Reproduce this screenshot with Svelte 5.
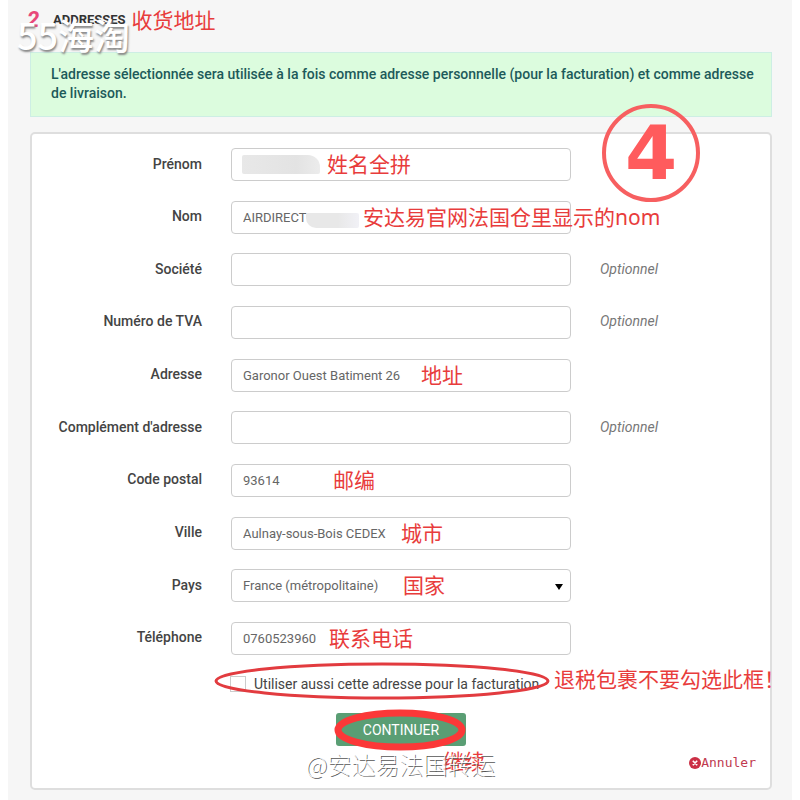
<script>
  const fields = [
    { id: 'firstname', label: 'Prénom', value: '', note: '姓名全拼', noteX: 96, mask: 'first' },
    { id: 'lastname', label: 'Nom', value: 'AIRDIRECT', note: '安达易官网法国仓里显示的nom', noteX: 132, mask: 'last' },
    { id: 'company', label: 'Société', value: '', optional: true },
    { id: 'vat', label: 'Numéro de TVA', value: '', optional: true },
    { id: 'address1', label: 'Adresse', value: 'Garonor Ouest Batiment 26', note: '地址', noteX: 190 },
    { id: 'address2', label: "Complément d'adresse", value: '', optional: true },
    { id: 'postcode', label: 'Code postal', value: '93614', note: '邮编', noteX: 102 },
    { id: 'city', label: 'Ville', value: 'Aulnay-sous-Bois CEDEX', note: '城市', noteX: 170 },
    { id: 'country', label: 'Pays', value: 'France (métropolitaine)', note: '国家', noteX: 172, select: true },
    { id: 'phone', label: 'Téléphone', value: '0760523960', note: '联系电话', noteX: 98 }
  ];
</script>

<main class="checkout">
  <header class="step">
    <span class="step-number">2</span>
    <h1>ADDRESSES</h1>
    <span class="note">收货地址</span>
    <span class="logo-mark">55海淘</span>
  </header>

  <p class="notice">
    L'adresse sélectionnée sera utilisée à la fois comme adresse personnelle (pour la facturation) et comme adresse de livraison.
  </p>

  <form class="card" onsubmit={(e) => e.preventDefault()}>
    <div class="rows">
      {#each fields as field}
        <div class="row">
          <label for={field.id}>{field.label}</label>
          <div class="control">
            {#if field.select}
              <select id={field.id}>
                <option>{field.value}</option>
              </select>
              <svg class="caret" viewBox="0 0 8 6" aria-hidden="true"><path d="M0 0h8L4 6z" /></svg>
            {:else}
              <input id={field.id} type="text" value={field.value} />
            {/if}
            {#if field.mask}
              <span class="mask {field.mask}"></span>
            {/if}
            {#if field.note}
              <span class="note over" style="left: {field.noteX}px">{field.note}</span>
            {/if}
          </div>
          {#if field.optional}
            <span class="optional">Optionnel</span>
          {/if}
        </div>
      {/each}
    </div>

    <div class="same-address">
      <label class="check">
        <input type="checkbox" />
        Utiliser aussi cette adresse pour la facturation
      </label>
      <svg class="ring" viewBox="0 0 336 38" aria-hidden="true">
        <ellipse cx="168" cy="19" rx="166" ry="17" />
      </svg>
      <span class="note over">退税包裹不要勾选此框！</span>
    </div>

    <div class="submit">
      <button type="submit">CONTINUER</button>
      <svg class="ring" viewBox="0 0 134 42" aria-hidden="true">
        <ellipse cx="67" cy="21" rx="62" ry="17" />
      </svg>
    </div>

    <div class="footer">
      <span class="note">继续</span>
      <span class="watermark">@安达易法国转运</span>
      <a href="#cancel">
        <svg viewBox="0 0 12 12" aria-hidden="true">
          <circle cx="6" cy="6" r="6" />
          <path d="M3.8 3.8l4.4 4.4M8.2 3.8L3.8 8.2" />
        </svg>Annuler
      </a>
    </div>

    <div class="badge">4</div>
  </form>
</main>

<style>
  :global(body) {
    margin: 0;
    background: #fff;
  }

  .checkout {
    box-sizing: border-box;
    min-height: 100vh;
    margin: 0 8px;
    padding: 8px 20px 10px 22px;
    background: #f6f6f6;
    font-family: Roboto, 'Noto Sans CJK SC', sans-serif;
    font-size: 13px;
    color: #444;
  }

  .step {
    position: relative;
    display: flex;
    align-items: center;
    height: 24px;
    margin-bottom: 20px;
  }

  .step-number {
    width: 23px;
    font-size: 22px;
    font-weight: 700;
    font-style: italic;
    line-height: 20px;
    text-indent: -3px;
    color: #e8487a;
  }

  h1 {
    margin: 0 6px 0 0;
    font-size: 13px;
    font-weight: 700;
    line-height: 20px;
    color: #333;
  }

  .logo-mark {
    position: absolute;
    top: 6px;
    left: -13px;
    font-family: 'Noto Sans CJK SC', sans-serif;
    font-size: 36px;
    font-weight: 500;
    line-height: 40px;
    white-space: nowrap;
    color: #fff;
    text-shadow: 1px 2px 2px #888;
  }

  .note {
    font-family: 'Noto Sans', 'Noto Sans CJK SC', sans-serif;
    font-size: 21px;
    font-weight: 400;
    line-height: 32px;
    white-space: nowrap;
    color: #e83c3c;
  }

  .note.over {
    position: absolute;
    top: 0;
    pointer-events: none;
  }

  .notice {
    margin: 0 0 15px;
    padding: 12px 10px 13px 20px;
    border: 1px solid #cdeee4;
    background: #dcfcde;
    font-size: 14px;
    font-weight: 500;
    line-height: 19px;
    color: #1d5a5a;
  }

  .card {
    position: relative;
    padding: 14px 0 17px;
    border: 2px solid #dedede;
    border-radius: 5px;
    background: #fff;
  }

  .rows {
    display: grid;
    align-content: space-between;
    min-height: 507px;
  }

  .row {
    display: grid;
    grid-template-columns: 1fr 2fr 1fr;
    column-gap: 29px;
    align-items: center;
  }

  .row > label {
    padding-bottom: 2px;
    font-size: 14px;
    font-weight: 500;
    text-align: right;
    white-space: nowrap;
  }

  .control {
    position: relative;
  }

  .control input,
  select {
    display: block;
    box-sizing: border-box;
    width: 100%;
    height: 33px;
    margin: 0;
    padding: 0 11px;
    border: 1px solid #ccc;
    border-radius: 4px;
    background: #fff;
    font: inherit;
    color: #666;
    appearance: none;
  }

  .caret {
    position: absolute;
    top: 15px;
    right: 8px;
    width: 8px;
    height: 6px;
  }

  .mask {
    position: absolute;
    border-radius: 2px 12px 2px 2px;
    background: linear-gradient(90deg, #e8e8e8, #e3e3e3 70%, #ececec);
  }

  .mask.first {
    top: 7px;
    left: 11px;
    width: 78px;
    height: 19px;
  }

  .mask.last {
    top: 12px;
    left: 75px;
    width: 53px;
    height: 15px;
    border-radius: 2px 2px 2px 10px;
    background: linear-gradient(90deg, #e8e8e8 60%, #f1f1f6);
  }

  .optional {
    padding-bottom: 2px;
    font-size: 14px;
    font-style: italic;
    color: #777;
  }

  .same-address {
    position: relative;
    margin: 20px 0 0 198px;
  }

  .check {
    display: flex;
    align-items: center;
    gap: 8px;
    height: 17px;
    font-size: 14px;
    white-space: nowrap;
  }

  .check input {
    width: 16px;
    height: 16px;
    margin: 0;
    border: 1px solid #ccc;
    background: #fff;
    appearance: none;
  }

  .ring {
    position: absolute;
    fill: none;
    stroke: #e23b3f;
    stroke-width: 3;
    pointer-events: none;
  }

  .same-address .ring {
    top: -13px;
    left: -16px;
    width: 336px;
    height: 38px;
  }

  .same-address .note {
    top: -12px;
    left: 324px;
  }

  .submit {
    position: relative;
    width: 130px;
    margin: 21px auto 9px;
  }

  button {
    width: 100%;
    height: 33px;
    padding: 0;
    border: 0;
    border-radius: 3px;
    background: #5a9e74;
    font: inherit;
    font-size: 14px;
    color: #fff;
  }

  .submit .ring {
    top: -4px;
    left: -3px;
    width: 134px;
    height: 42px;
    stroke: #fb3838;
    stroke-width: 7;
  }

  .footer {
    position: relative;
    display: flex;
    justify-content: flex-end;
    padding-right: 14px;
  }

  .footer .note,
  .watermark {
    position: absolute;
    top: -10px;
    left: calc(50% + 42px);
  }

  .watermark {
    top: -7px;
    left: calc(50% - 95px);
    font-family: 'Noto Sans CJK SC', sans-serif;
    font-size: 24px;
    font-weight: 100;
    line-height: 32px;
    white-space: nowrap;
    color: #fff;
    text-shadow: 1px 1px 0 #555;
  }

  a {
    display: flex;
    align-items: center;
    font-family: 'DejaVu Sans Mono', monospace;
    line-height: 16px;
    text-decoration: none;
    color: #c0394f;
  }

  a svg {
    width: 12px;
    height: 12px;
    fill: #cb2f45;
    stroke: #fff;
    stroke-width: 1.6;
  }

  a circle {
    stroke: none;
  }

  .badge {
    position: absolute;
    top: -30px;
    right: 70px;
    box-sizing: border-box;
    width: 98px;
    height: 98px;
    border: 4px solid #f75f60;
    border-radius: 50%;
    font-family: 'DejaVu Sans', sans-serif;
    font-size: 75px;
    font-weight: 700;
    line-height: 90px;
    text-align: center;
    color: #ff5b5d;
  }
</style>
